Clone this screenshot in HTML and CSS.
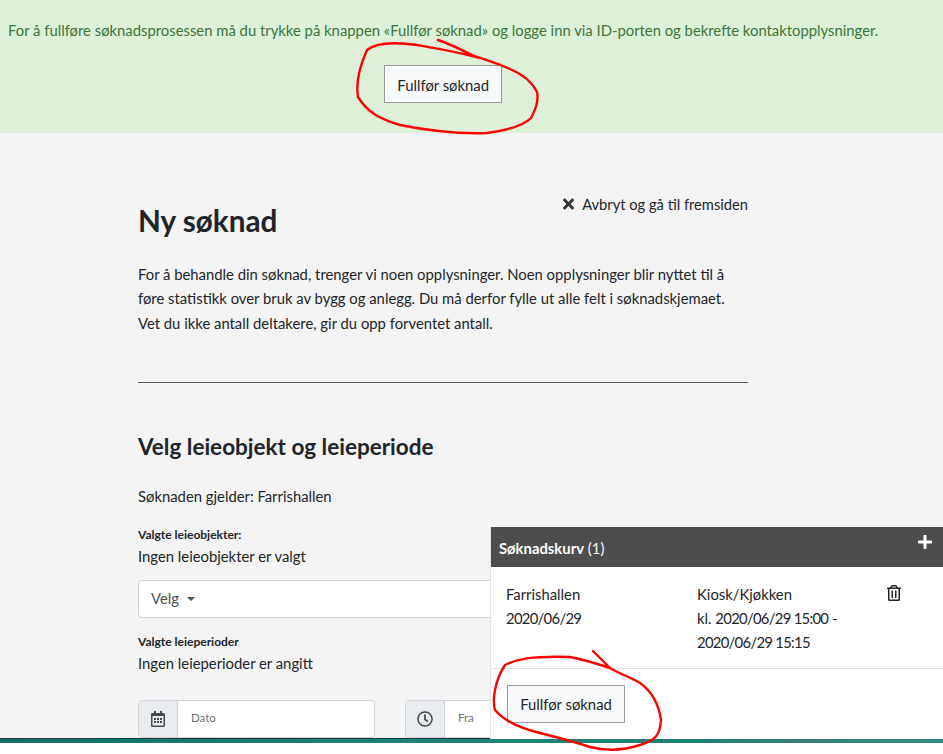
FILE: index.html
```html
<!DOCTYPE html>
<html lang="no">
<head>
<meta charset="utf-8">
<title>Ny søknad</title>
<link rel="stylesheet" href="styles.css">
</head>
<body>
<div class="page">
  <section class="banner">
    <div class="banner-inner">
      <p class="banner-text">For å fullføre søknadsprosessen må du trykke på knappen «Fullfør søknad» og logge inn via ID-porten og bekrefte kontaktopplysninger.</p>
      <button class="btn">Fullfør søknad</button>
    </div>
  </section>
  <main class="main">
    <div class="content">
      <div class="title-row">
        <h1>Ny søknad</h1>
        <a class="cancel"><svg class="icon-x" viewBox="0 0 352 512"><path d="M242.72 256l100.07-100.07c12.28-12.28 12.28-32.19 0-44.48l-22.24-22.24c-12.28-12.28-32.19-12.28-44.48 0L176 189.28 75.93 89.21c-12.28-12.28-32.19-12.28-44.48 0L9.21 111.45c-12.28 12.28-12.28 32.19 0 44.48L109.28 256 9.21 356.07c-12.28 12.28-12.28 32.19 0 44.48l22.24 22.24c12.28 12.28 32.2 12.28 44.48 0L176 322.72l100.07 100.07c12.28 12.28 32.2 12.28 44.48 0l22.24-22.24c12.28-12.28 12.28-32.19 0-44.48L242.72 256z"/></svg>Avbryt og gå til fremsiden</a>
      </div>
      <p class="intro">For å behandle din søknad, trenger vi noen opplysninger. Noen opplysninger blir nyttet til å føre statistikk over bruk av bygg og anlegg. Du må derfor fylle ut alle felt i søknadskjemaet. Vet du ikke antall deltakere, gir du opp forventet antall.</p>
      <hr class="rule">
      <h2>Velg leieobjekt og leieperiode</h2>
      <p class="applies">Søknaden gjelder: Farrishallen</p>
      <div class="label">Valgte leieobjekter:</div>
      <p class="value">Ingen leieobjekter er valgt</p>
      <div class="select">Velg<span class="caret"></span></div>
      <div class="label label-tight">Valgte leieperioder</div>
      <p class="value">Ingen leieperioder er angitt</p>
      <div class="inputs">
        <div class="input">
          <span class="addon"><svg class="addon-icon" viewBox="0 0 448 512"><path d="M148 288h-40c-6.6 0-12-5.4-12-12v-40c0-6.6 5.4-12 12-12h40c6.6 0 12 5.4 12 12v40c0 6.6-5.4 12-12 12zm108-12v-40c0-6.6-5.4-12-12-12h-40c-6.6 0-12 5.4-12 12v40c0 6.6 5.4 12 12 12h40c6.6 0 12-5.4 12-12zm96 0v-40c0-6.6-5.4-12-12-12h-40c-6.6 0-12 5.4-12 12v40c0 6.6 5.4 12 12 12h40c6.6 0 12-5.4 12-12zm-96 96v-40c0-6.6-5.4-12-12-12h-40c-6.6 0-12 5.4-12 12v40c0 6.6 5.4 12 12 12h40c6.6 0 12-5.4 12-12zm-96 0v-40c0-6.6-5.4-12-12-12h-40c-6.6 0-12 5.4-12 12v40c0 6.6 5.4 12 12 12h40c6.6 0 12-5.4 12-12zm192 0v-40c0-6.6-5.4-12-12-12h-40c-6.6 0-12 5.4-12 12v40c0 6.6 5.4 12 12 12h40c6.6 0 12-5.4 12-12zm96-260v352c0 26.5-21.5 48-48 48H48c-26.5 0-48-21.5-48-48V112c0-26.5 21.5-48 48-48h48V12c0-6.6 5.4-12 12-12h40c6.6 0 12 5.4 12 12v52h128V12c0-6.6 5.4-12 12-12h40c6.6 0 12 5.4 12 12v52h48c26.5 0 48 21.5 48 48zm-48 346V160H48v298c0 3.3 2.7 6 6 6h340c3.3 0 6-2.7 6-6z"/></svg></span>
          <span class="placeholder">Dato</span>
        </div>
        <div class="input">
          <span class="addon"><svg class="addon-icon" viewBox="0 0 512 512"><path d="M256 8C119 8 8 119 8 256s111 248 248 248 248-111 248-248S393 8 256 8zm0 448c-110.5 0-200-89.5-200-200S145.5 56 256 56s200 89.5 200 200-89.5 200-200 200zm61.8-104.4l-84.9-61.7c-3.1-2.3-4.9-5.9-4.9-9.7V116c0-6.6 5.4-12 12-12h32c6.6 0 12 5.4 12 12v141.7l66.8 48.6c5.4 3.9 6.5 11.4 2.6 16.8L334.6 349c-3.9 5.3-11.4 6.5-16.8 2.6z"/></svg></span>
          <span class="placeholder">Fra</span>
        </div>
      </div>
    </div>
  </main>
  <div class="strip"></div>
  <div class="tail"></div>

  <aside class="cart">
    <header class="cart-head">
      <span class="cart-title"><b>Søknadskurv</b> (1)</span>
      <svg class="icon-plus" viewBox="0 0 448 512"><path d="M416 208H272V64c0-17.67-14.33-32-32-32h-32c-17.67 0-32 14.33-32 32v144H32c-17.67 0-32 14.33-32 32v32c0 17.67 14.33 32 32 32h144v144c0 17.67 14.33 32 32 32h32c17.67 0 32-14.33 32-32V304h144c17.67 0 32-14.33 32-32v-32c0-17.67-14.33-32-32-32z"/></svg>
    </header>
    <div class="cart-body">
      <div class="cart-col-a">Farrishallen<br><span class="date">2020/06/29</span></div>
      <div class="cart-col-b">Kiosk/Kjøkken<br>kl. <span class="date">2020/06/29 15:00</span> - <span class="date">2020/06/29 15:15</span></div>
      <svg class="icon-trash" viewBox="0 0 448 512"><path d="M268 416h24a12 12 0 0 0 12-12V188a12 12 0 0 0-12-12h-24a12 12 0 0 0-12 12v216a12 12 0 0 0 12 12zM432 80h-82.41l-34-56.7A48 48 0 0 0 274.41 0H173.59a48 48 0 0 0-41.16 23.3L98.41 80H16A16 16 0 0 0 0 96v16a16 16 0 0 0 16 16h16v336a48 48 0 0 0 48 48h288a48 48 0 0 0 48-48V128h16a16 16 0 0 0 16-16V96a16 16 0 0 0-16-16zM171.84 50.91A6 6 0 0 1 177 48h94a6 6 0 0 1 5.15 2.91L293.61 80H154.39zM368 464H80V128h288zm-212-48h24a12 12 0 0 0 12-12V188a12 12 0 0 0-12-12h-24a12 12 0 0 0-12 12v216a12 12 0 0 0 12 12z"/></svg>
    </div>
    <div class="cart-foot"><button class="btn">Fullfør søknad</button></div>
  </aside>

  <svg class="scribble" viewBox="0 0 943 754" fill="none">
    <path d="M438 40C450 44 460 49 472 55C480 58 495 62 510 69C522 74 532 82 537 92C539 102 535 110 531 118C524 125 510 130 487 133C460 134 425 130 400 125C380 119 368 113 358 97C356 85 358 70 367 50C376 43 395 42 417 45C440 49 458 52 480 58"/>
    <path d="M593 651C600 658 606 664 610 668C620 674 632 678 640 683C650 690 658 700 661 720C660 735 656 740 640 745C625 750 610 752 590 747C575 742 560 738 540 733C520 728 503 720 495 710C492 700 495 680 505 665C517 659 530 656 570 657C585 660 598 664 610 668"/>
  </svg>
</div>
</body>
</html>
```
FILE: styles.css
```css
* { box-sizing: border-box; }
html, body { margin: 0; height: 100%; overflow: hidden; }
body {
  font-family: Lato, "Open Sans", sans-serif;
  font-size: 14.84px;
  line-height: 24.4px;
  color: #212529;
  background: #fff;
}
.page {
  position: relative;
  width: 943px;
  height: 754px;
  display: flex;
  flex-direction: column;
  overflow: hidden;
}
p { margin: 0; }

.banner {
  height: 133px;
  flex: none;
  background: #dff0d8;
  padding: 18px 8px 0;
}
.banner-inner {
  display: inline-block;
  text-align: center;
}
.banner-text { color: #3c763d; margin-bottom: 23px; text-align: left; }
.btn {
  font: inherit;
  width: 118px;
  height: 38px;
  padding: 1px 0 0;
  color: #212529;
  background: #f8f9fa;
  border: 1px solid #9a9a9a;
  border-radius: 0;
}

.main {
  flex: 1;
  min-height: 0;
  background: #f4f4f4;
  padding: 0 0 0 138px;
  overflow: hidden;
}
.content { width: 610px; }
.title-row {
  display: flex;
  justify-content: space-between;
  align-items: flex-start;
  padding-top: 59px;
}
h1 {
  margin: 12px 0 0;
  font-size: 29.7px;
  line-height: 34px;
  font-weight: 700;
}
.cancel { display: flex; align-items: center; font-size: 14.7px; }
.icon-x { width: 13px; height: 16px; margin-right: 7px; fill: #333; }
.intro { margin-top: 24px; }
.rule { margin: 47px 0 0; border: 0; border-top: 1px solid #5a5a5a; }
h2 {
  margin: 50px 0 0;
  font-size: 22.5px;
  line-height: 28px;
  font-weight: 700;
}
.applies { margin-top: 23px; }
.label { margin-top: 16px; font-size: 12px; line-height: 20px; font-weight: 700; }
.label-tight { margin-top: 14px; }
.value { line-height: 22px; }
.select {
  margin-top: 13px;
  height: 38px;
  padding: 0 12px;
  display: flex;
  align-items: center;
  color: #495057;
  background: #fff;
  border: 1px solid #ced4da;
  border-radius: 4px;
}
.caret {
  margin-left: 8px;
  border-left: 4px solid transparent;
  border-right: 4px solid transparent;
  border-top: 4px solid #495057;
}
.inputs { display: flex; gap: 30px; margin-top: 26px; }
.input {
  flex: none;
  width: 237px;
  height: 38px;
  display: flex;
  align-items: center;
  background: #fff;
  border: 1px solid #ced4da;
  border-radius: 4px;
  overflow: hidden;
}
.addon {
  flex: none;
  width: 39px;
  height: 100%;
  display: flex;
  align-items: center;
  justify-content: center;
  background: #e9ecef;
  border-right: 1px solid #ced4da;
}
.addon-icon { width: 16px; height: 16px; fill: #454a50; }
.placeholder { padding-left: 13px; font-size: 11.5px; color: #6c757d; }

.strip {
  height: 5px;
  flex: none;
  background: linear-gradient(90deg, #14706a, #1f8577 45%, #1f7f78 75%, #3a7f78 85%, #2b8a82);
  border-top: 1px solid #1c3a3a;
}
.tail { height: 11px; flex: none; background: #fff; }

.cart {
  position: absolute;
  left: 491px;
  top: 527px;
  width: 452px;
  height: 212px;
  background: #fff;
  box-shadow: -1px 0 0 #e2e2e2;
  display: flex;
  flex-direction: column;
}
.cart-head {
  height: 40px;
  flex: none;
  position: relative;
  padding: 9px 8px 0;
  color: #fff;
  background: #4d4d4d;
}
.cart-title b { font-weight: 700; }
.icon-plus { position: absolute; right: 11px; top: 7px; width: 14px; height: 16px; fill: #fff; }
.cart-body {
  height: 102px;
  flex: none;
  position: relative;
  display: flex;
  padding: 15px 15px 0;
  line-height: 24px;
  border-bottom: 1px solid #e2e2e2;
}
.cart-col-a { width: 191px; flex: none; }
.cart-col-b { width: 160px; flex: none; }
.date { letter-spacing: -0.7px; }
.icon-trash { position: absolute; left: 396px; top: 18px; width: 14px; height: 16px; fill: #212529; }
.cart-foot { padding: 16px 16px 0; }

.scribble {
  position: absolute;
  left: 0;
  top: 0;
  width: 943px;
  height: 754px;
  stroke: #f00;
  stroke-width: 2.4px;
  stroke-linecap: round;
  stroke-linejoin: round;
  pointer-events: none;
}
```
